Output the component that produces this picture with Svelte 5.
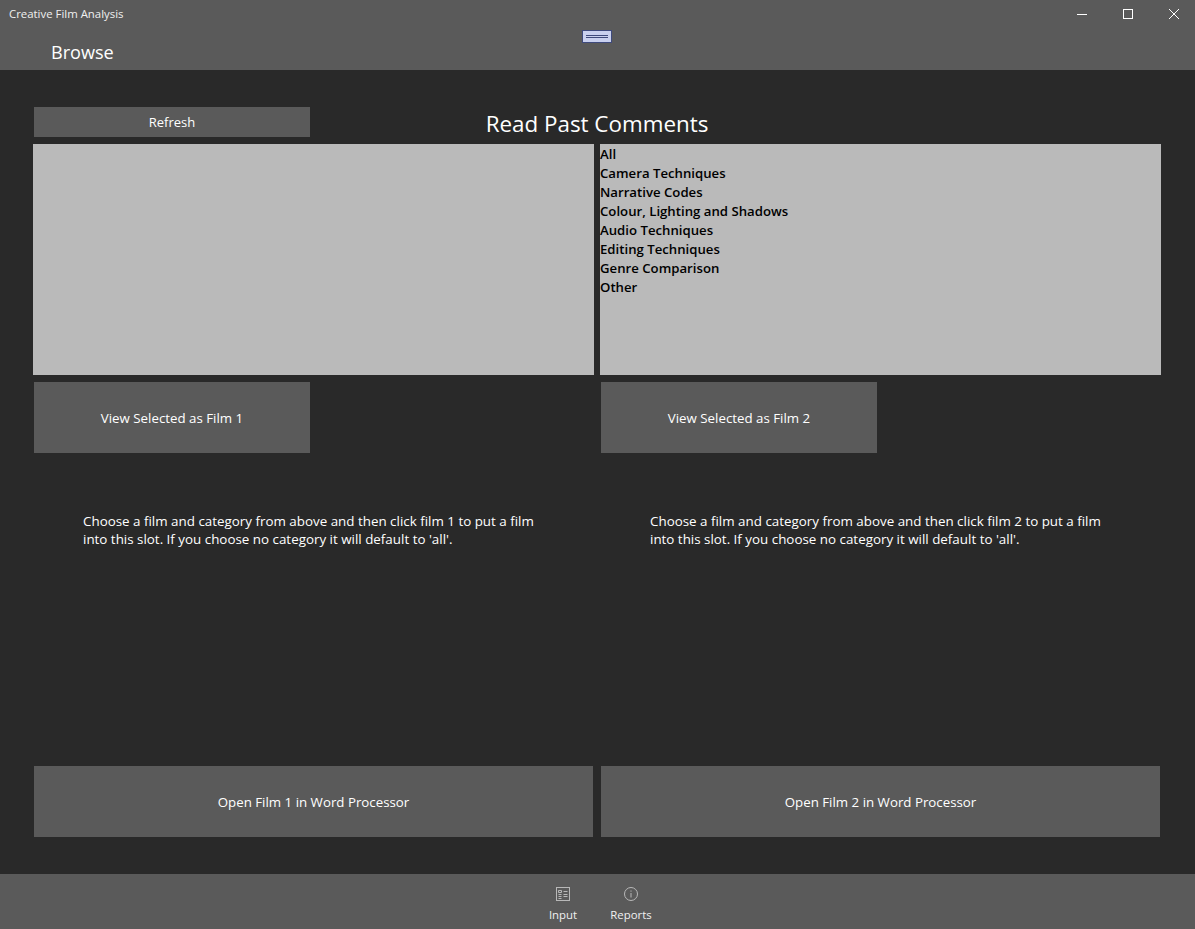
<script>
  const categories = ['All', 'Camera Techniques', 'Narrative Codes', 'Colour, Lighting and Shadows', 'Audio Techniques', 'Editing Techniques', 'Genre Comparison', 'Other'];
  const films = [1, 2];
</script>

<div class="window">
  <header class="top">
    <div class="titlebar">
      <span class="app-name">Creative Film Analysis</span>
      <div class="controls">
        <svg width="46" height="28" viewBox="0 0 46 28"><path d="M20 14.5h10" stroke="#fff" fill="none"/></svg>
        <svg width="46" height="28" viewBox="0 0 46 28"><rect x="20.5" y="9.5" width="9" height="9" stroke="#fff" fill="none"/></svg>
        <svg width="46" height="28" viewBox="0 0 46 28"><path d="M20 9l10 10M30 9L20 19" stroke="#fff" fill="none"/></svg>
      </div>
    </div>
    <div class="page-title">Browse</div>
    <div class="handle"><span></span></div>
  </header>

  <main class="content">
    <div class="title-row">
      <button class="btn refresh">Refresh</button>
      <h1>Read Past Comments</h1>
      <div></div>
    </div>

    <div class="columns lists">
      <div class="list"></div>
      <div class="list">
        {#each categories as c}
          <div class="item">{c}</div>
        {/each}
      </div>
    </div>

    <div class="columns views">
      {#each films as n}
        <div><button class="btn view">View Selected as Film {n}</button></div>
      {/each}
    </div>

    <div class="columns notes">
      {#each films as n}
        <p>Choose a film and category from above and then click film {n} to put a film into this slot. If you choose no category it will default to 'all'.</p>
      {/each}
    </div>

    <div class="columns opens">
      {#each films as n}
        <button class="btn open">Open Film {n} in Word Processor</button>
      {/each}
    </div>
  </main>

  <footer class="appbar">
    <div class="tab">
      <svg width="16" height="16" viewBox="0 0 16 16" fill="none" stroke="#b8b8b8">
        <rect x="1.5" y="1.5" width="13" height="13"/>
        <path d="M3.5 4.5h3v2h-3zM3.5 8.5h3M3.5 10.5h3M3.5 12.5h3M8.5 5.5h4M8.5 8.5h4M8.5 10.5h4"/>
      </svg>
      <span>Input</span>
    </div>
    <div class="tab">
      <svg width="16" height="16" viewBox="0 0 16 16" fill="none" stroke="#b8b8b8">
        <circle cx="8" cy="8" r="6.5"/>
        <path d="M8 7v4.5M8 4.5v1.2"/>
      </svg>
      <span>Reports</span>
    </div>
  </footer>
</div>

<style>
  :global(body) { margin: 0; background: #292929; }

  .window {
    height: 929px;
    display: flex;
    flex-direction: column;
    font-family: "Open Sans", "Noto Sans", sans-serif;
    font-size: 14px;
    color: #fff;
    background: #292929;
  }

  .top { position: relative; height: 70px; background: #5a5a5a; flex: none; }
  .titlebar { display: flex; justify-content: space-between; height: 28px; align-items: center; padding-left: 9px; }
  .app-name { font-size: 11.4px; color: #f0f0f0; margin-bottom: 2px; }
  .controls { display: flex; height: 28px; }
  .page-title { font-size: 18.1px; padding-left: 51px; line-height: 48px; height: 42px; }
  .handle {
    position: absolute;
    left: 582px;
    top: 30px;
    width: 28px;
    height: 11px;
    background: #c9d0ef;
    border: 1px solid #3f4a7c;
    display: flex;
    align-items: center;
    justify-content: center;
  }
  .handle span { width: 22px; height: 1px; border-top: 1px solid #3f4a7c; border-bottom: 1px solid #3f4a7c; }

  .content { flex: 1; padding: 37px 34px 0 33px; display: flex; flex-direction: column; }
  .title-row { display: grid; grid-template-columns: 1fr auto 1fr; height: 37px; }
  h1 { margin: 0; font-size: 22.4px; font-weight: 400; line-height: 33px; }

  .btn {
    display: block;
    background: #5a5a5a;
    border: none;
    color: #fff;
    font: inherit;
    font-size: 13.3px;
    padding: 0;
  }
  .refresh { width: 276px; height: 30px; margin-left: 1px; font-size: 13px; }

  .columns { display: grid; grid-template-columns: 561px 561px; gap: 6px; }
  .lists { height: 231px; }
  .list { background: #bababa; }
  .item { height: 19px; line-height: 19px; color: #000; font-size: 13.2px; font-weight: 600; }
  .list .item:first-child { margin-top: 1px; }

  .views { margin-top: 7px; }
  .view { width: 276px; height: 71px; margin-left: 1px; }

  .notes { margin-top: 59px; height: 254px; }
  p { margin: 0; padding: 0 50px; line-height: 18px; font-size: 13.39px; width: 461px; }

  .opens { padding-left: 1px; }
  .open { height: 71px; width: 559px; }

  .appbar {
    height: 55px;
    background: #5a5a5a;
    display: flex;
    justify-content: center;
    flex: none;
    padding-right: 1px;
  }
  .tab { width: 68px; display: flex; flex-direction: column; align-items: center; padding-top: 12px; font-size: 11.4px; color: #f0f0f0; }
  .tab span { margin-top: 5px; }
</style>
